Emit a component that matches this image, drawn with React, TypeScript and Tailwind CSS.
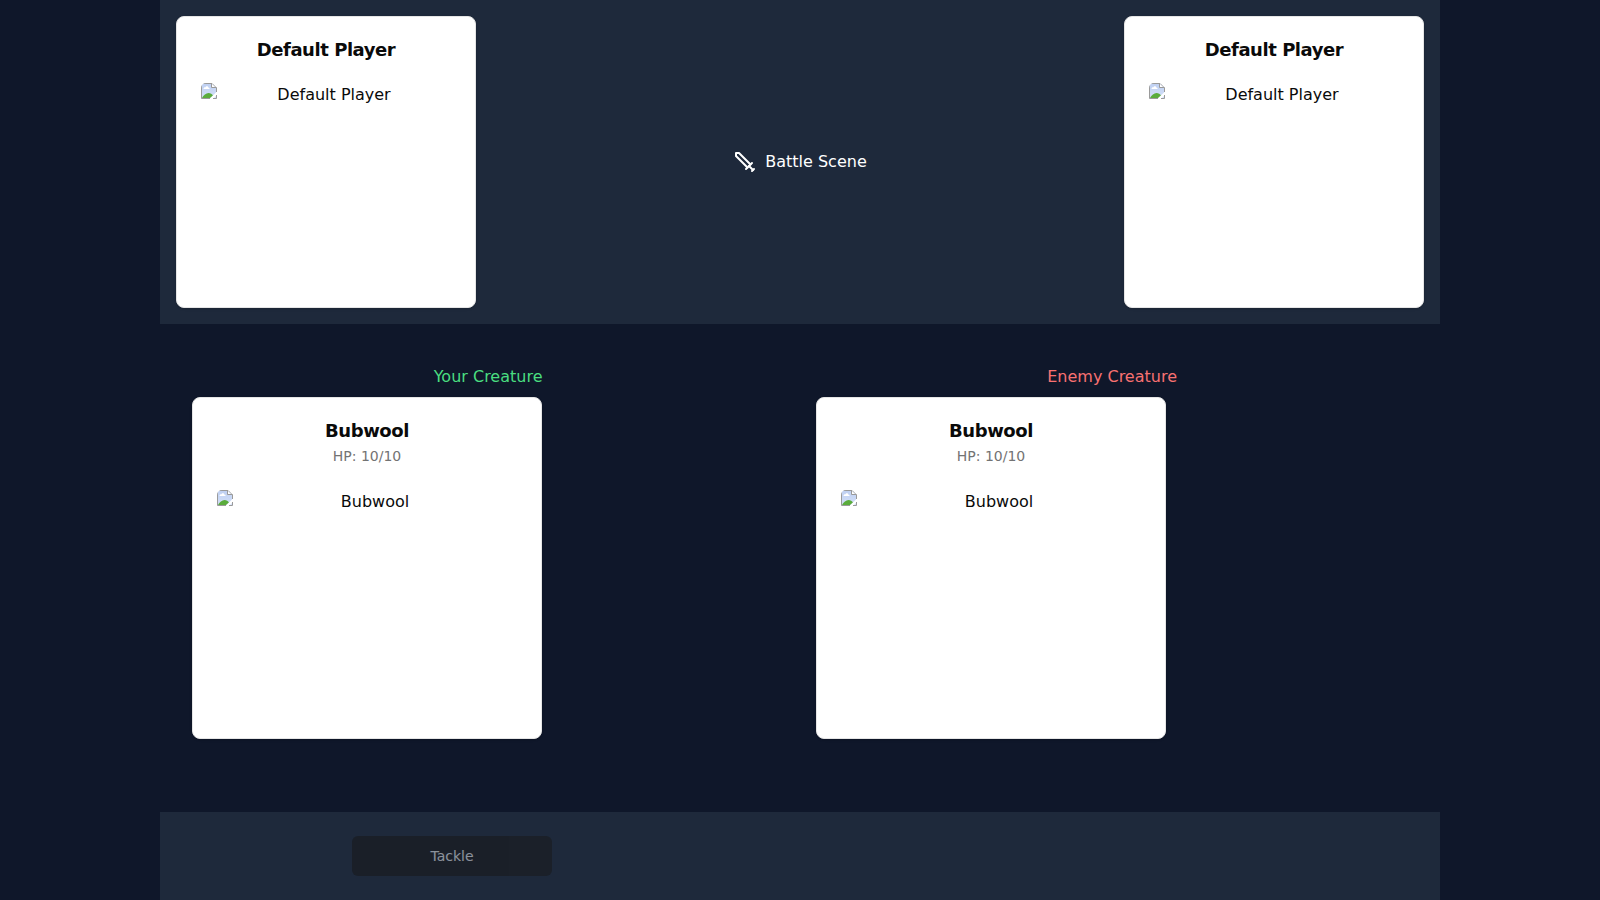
import type { ReactNode } from "react";

function BrokenImageIcon() {
  return (
    <svg width="16" height="16" viewBox="0 0 16 16" className="block shrink-0" aria-hidden="true">
      <defs>
        <linearGradient id="sky" x1="0" y1="0" x2="0" y2="1">
          <stop offset="0" stopColor="#bfd0f2" />
          <stop offset="1" stopColor="#d3e0f8" />
        </linearGradient>
        <clipPath id="corner">
          <path d="M0 16V5a5 5 0 0 1 5-5h11v16z" />
        </clipPath>
      </defs>
      <g clipPath="url(#corner)">
        <path d="M0.5 0.5H11L15.5 5V15.5H0.5Z" fill="url(#sky)" />
        <path d="M2.500 6c0-1.200 1-1.800 1.900-1.600C4.800 2.800 7 2.800 7.300 4.400 8.300 4.400 8.800 5.200 8.500 6Z" fill="#fff" />
        <path d="M1 15c1.500-2.800 4-5 6.500-5 2 0 3.500 1 4.500 2.500L9 15Z" fill="#5aac3c" />
        <path d="M8.500 16 16 8.500V12L12 16Z" fill="#fff" />
        <path d="M0.500 15.500V0.500H11L15.500 5V9M0.500 15.500H9M12 15.500H15.500V12" fill="none" stroke="#9a9a9a" />
        <path d="M11 1V5H15Z" fill="#fff" />
        <path d="M10.500 0.500V4.500H15.500" fill="none" stroke="#9a9a9a" />
      </g>
    </svg>
  );
}

function SwordIcon() {
  return (
    <svg width="24" height="24" viewBox="0 0 24 24" fill="none" stroke="currentColor" strokeWidth="2" strokeLinecap="round" strokeLinejoin="round" aria-hidden="true">
      <polyline points="14.5 17.5 3 6 3 3 6 3 17.5 14.5" />
      <line x1="13" x2="19" y1="19" y2="13" />
      <line x1="16" x2="20" y1="16" y2="20" />
      <line x1="19" x2="21" y1="21" y2="19" />
    </svg>
  );
}

function Picture({ label }: { label: string }) {
  return (
    <div className="flex">
      <BrokenImageIcon />
      <span className="flex-1 text-center">{label}</span>
    </div>
  );
}

function PlayerCard() {
  return (
    <div className="h-[292px] w-[300px] rounded-lg border border-[#e5e5e5] bg-white p-6 text-[#0a0a0a] shadow-sm">
      <h3 className="mb-6 text-center text-lg leading-none font-bold tracking-tight">Default Player</h3>
      <Picture label="Default Player" />
    </div>
  );
}

function Creature({ label }: { label: ReactNode }) {
  return (
    <div>
      {label}
      <div className="mt-2 h-[342px] w-[350px] rounded-lg border border-[#e5e5e5] bg-white p-6 text-[#0a0a0a] shadow-sm">
        <h3 className="mb-1.5 text-center text-lg leading-none font-bold tracking-tight">Bubwool</h3>
        <p className="mb-6 text-center text-sm text-[#737373]">HP: 10/10</p>
        <Picture label="Bubwool" />
      </div>
    </div>
  );
}

export default function App() {
  return (
    <div className="h-screen overflow-hidden bg-[#0f172a] font-['DejaVu_Sans',sans-serif] text-base">
      <div className="mx-auto flex h-full w-[1280px] flex-col">
        <header className="flex h-[324px] items-center justify-between bg-[#1e293b] p-4">
          <PlayerCard />
          <div className="flex items-center gap-2 text-white">
            <SwordIcon />
            <span>Battle Scene</span>
          </div>
          <PlayerCard />
        </header>
        <main className="grid h-[488px] grid-cols-2 gap-8 px-8 pt-[41px]">
          <Creature label={<div className="w-[350.5px] text-right text-[#4ade80]">Your Creature</div>} />
          <Creature label={<div className="w-[361px] text-right text-[#f87171]">Enemy Creature</div>} />
        </main>
        <footer className="flex-1 bg-[#1e293b] pt-6 pl-48">
          <button disabled className="h-10 w-[200px] rounded-md bg-[#171717] text-sm text-[#f8fafc] opacity-50">
            Tackle
          </button>
        </footer>
      </div>
    </div>
  );
}
